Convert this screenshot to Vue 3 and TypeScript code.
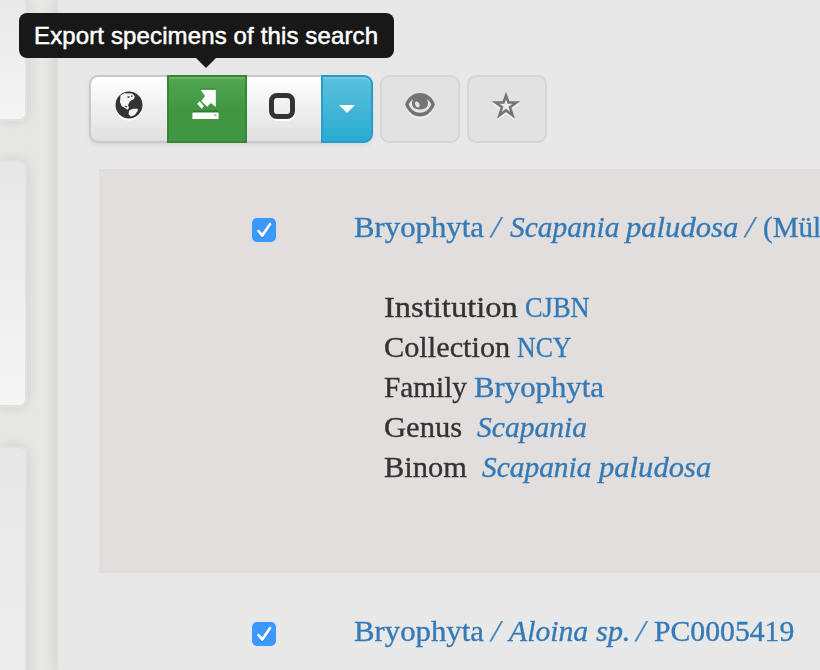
<script setup lang="ts">
interface Word {
  text: string
  advance: number
  stretch: number
  kind?: 'link' | 'taxon' | 'label' | 'slash'
}

const word = (text: string, advance: number, stretch = 1, kind: Word['kind'] = 'link'): Word => ({ text, advance, stretch, kind })

const firstTitle: Word[] = [
  word('Bryophyta', 135, 1.025),
  word('/', 21, 1, 'slash'),
  word('Scapania', 116, 0.98, 'taxon'),
  word('paludosa', 117, 1.02, 'taxon'),
  word('/', 20, 1, 'slash'),
  word('(Mül', 60, 0.97),
]

const secondTitle: Word[] = [
  word('Bryophyta', 135, 1.025),
  word('/', 20, 1, 'slash'),
  word('Aloina', 87, 0.99, 'taxon'),
  word('sp.', 38, 1, 'taxon'),
  word('/', 20, 1, 'slash'),
  word('PC0005419', 142, 0.99),
]

const details: Word[][] = [
  [word('Institution', 141, 1.085, 'label'), word('CJBN', 70, 0.88)],
  [word('Collection', 133, 1.01, 'label'), word('NCY', 60, 0.86)],
  [word('Family', 90, 0.975, 'label'), word('Bryophyta', 130, 1.025)],
  [word('Genus', 93, 1.02, 'label'), word('Scapania', 120, 0.985, 'taxon')],
  [word('Binom', 98, 1.015, 'label'), word('Scapania', 117, 0.98, 'taxon'), word('paludosa', 117, 1.02, 'taxon')],
]

const rows = [
  { title: firstTitle, details },
  { title: secondTitle, details: [] as Word[][] },
]

const shape = (part: Word) => ({
  transform: part.kind === 'slash' ? 'translateX(3px) skewX(-13deg)' : `scaleX(${part.stretch})`,
})
</script>

<template>
  <div class="page">
    <aside class="sidebar">
      <div class="card card-top"></div>
      <div class="card card-middle"></div>
      <div class="card card-bottom"></div>
    </aside>
    <main class="content">
      <div class="toolbar">
        <div class="group">
          <button class="btn globe" aria-label="Map">
            <svg class="globe-icon" viewBox="0 0 28 28">
              <circle cx="14" cy="14" r="13.5" fill="#333" />
              <path fill="#f4f4f4" d="M5.5 4.5 9 2.2l8 .3 2.7 2.5-.6 3L16 9.5 14.5 11 13 14l1 3-1.5 1.7L10 17l-3.5-2L5 11z" />
              <path fill="#f4f4f4" d="m14 19.5 4-1.8h4.7l.2 2-3.4 4.5-4 1.3-2-2.5z" />
              <path fill="none" stroke="#333" stroke-width="1.3" d="M12.5 6h2M16 5.2h1.5M10 15l2 1" />
            </svg>
          </button>
          <button class="btn export" aria-label="Export">
            <svg class="export-icon" viewBox="0 0 28 32">
              <path fill="#2f7c30" d="M8.3.5h15.4v2H8.3zM1 22.5h25v2H1z" />
              <path fill="#fff" d="M8.5 1.8h15.3V19l-4.9-4-3.7 3.8L9.3 13 13 8zM7.6 13.2l4.4 5-2.3 2.6-4.5-5zM1 24.4h25l.6.8V31H.4v-5.8z" />
              <path fill="#8dbb8e" d="M22 26.4h2.5v1.6H22z" />
            </svg>
          </button>
          <button class="btn select" aria-label="Select"><i class="square"></i></button>
          <button class="btn more" aria-label="More"><i class="caret"></i></button>
          <div class="tooltip"><span>Export specimens of this search</span></div>
        </div>
        <button class="btn disabled" aria-label="View" disabled>
          <svg class="eye-icon" viewBox="0 0 30 26">
            <path fill="#747474" d="M15 1C8 1 3 5 0 12.5 3 20 8 24.5 15 24.5S27 20 30 12.5C27 5 22 1 15 1z" />
            <path fill="#e5e5e5" d="M8 7C6 8.5 4.7 10 3.8 12.5 6 18 10 20.7 15 20.7s9-2.7 11.2-8.2C25.3 10 24 8.5 22 7c3 7-1 10.5-7 10.5S5 14 8 7z" />
            <ellipse cx="12.3" cy="12.5" rx="2" ry="3" fill="#e5e5e5" transform="rotate(-28 12.3 12.5)" />
          </svg>
        </button>
        <button class="btn disabled" aria-label="Favorite" disabled>
          <svg class="star-icon" viewBox="0 0 28 28">
            <path fill="#eaeaea" stroke="#747474" stroke-width="2.5" d="m14 4.5 2.5 7h8l-6.5 4.8 2.6 8-6.6-4.9-6.6 4.9 2.6-8-6.5-4.8h8z" />
          </svg>
        </button>
      </div>
      <section v-for="(row, index) in rows" :key="index" class="record">
        <span class="checkbox" role="checkbox" aria-checked="true">
          <svg viewBox="0 0 24 24"><path d="m6.5 13.2 3.8 4.3L18 6.2" /></svg>
        </span>
        <div class="record-body">
          <a class="line">
            <span v-for="(part, i) in row.title" :key="i" class="slot" :style="{ width: part.advance + 'px' }"><span class="word" :class="part.kind" :style="shape(part)">{{ part.text }}</span></span>
          </a>
          <div v-if="row.details.length" class="details">
            <div v-for="(detail, d) in row.details" :key="d" class="line">
              <span v-for="(part, i) in detail" :key="i" class="slot" :style="{ width: part.advance + 'px' }"><span class="word" :class="part.kind" :style="shape(part)">{{ part.text }}</span></span>
            </div>
          </div>
        </div>
      </section>
    </main>
  </div>
</template>

<style>
body { margin: 0; overflow: hidden; }
</style>

<style scoped>
* { box-sizing: border-box; }
.page { display: flex; width: 820px; height: 670px; overflow: hidden; background: #e7e7e4; }
.sidebar { width: 57px; flex: none; display: flex; flex-direction: column; gap: 39px; }
.card { width: 27px; flex: none; border: 2px solid #e1e1e1; border-left: 0; box-shadow: 0 0 14px rgba(0,0,0,.12); }
.card-top { height: 121px; border-top: 0; border-radius: 0 0 8px 0; background: linear-gradient(#e8e8e8, #f5f5f5); }
.card-middle { height: 247px; border-radius: 0 8px 8px 0; background: linear-gradient(#e7e7e7, #f5f5f5); }
.card-bottom { height: 260px; border-radius: 0 8px 0 0; background: linear-gradient(#e7e7e7, #eee); }
.content { flex: 1; min-width: 0; height: 670px; padding: 75px 0 0 30px; background: #e8e8e8; border-left: 2px solid #e3e3e3; box-shadow: 0 0 14px rgba(0,0,0,.13); }
.toolbar { display: flex; gap: 7px; height: 94px; align-items: flex-start; }
.group { display: flex; position: relative; border-radius: 9px; box-shadow: 0 2px 4px rgba(0,0,0,.08); }
.btn { display: flex; align-items: flex-start; justify-content: center; margin: 0; padding: 14px 0 0; height: 68px; border: 2px solid #c9c9c9; background: linear-gradient(#fff, #e0e0e0); }
.globe { width: 78px; border-right: 0; border-radius: 9px 0 0 9px; }
.export { width: 80px; border-color: #398439; background: linear-gradient(#52a852, #419641 50%); box-shadow: inset 0 2px rgba(255,255,255,.15); padding-top: 11px; }
.select { width: 74px; border-left: 0; border-right: 0; padding-top: 16px; }
.more { width: 52px; border-color: #269ec5; border-radius: 0 9px 9px 0; background: linear-gradient(#5bc0de, #2aabd2); box-shadow: inset 0 2px rgba(255,255,255,.15); padding-top: 28px; }
.disabled { width: 80px; border-color: #d5d5d5; border-radius: 9px; background: #e2e2e2; }
.globe-icon { width: 28px; height: 28px; filter: drop-shadow(0 2px #fff); margin-right: 1px; }
.export-icon { width: 28px; height: 32px; margin-right: 2px; }
.square { display: block; width: 26px; height: 26px; border: 5px solid #333; border-radius: 8px; box-shadow: 0 2px #fff; margin-right: 4px; }
.caret { border: 8px solid transparent; border-top-color: #fff; border-bottom: 0; }
.eye-icon { width: 30px; height: 26px; filter: drop-shadow(0 2px #f3f3f3); margin-top: 1px; }
.star-icon { width: 28px; height: 28px; filter: drop-shadow(0 2px #f3f3f3); margin-right: 2px; }
.tooltip { position: absolute; left: -70px; top: -62px; width: 375px; height: 45px; padding-left: 15px; border-radius: 8px; background: #181818; color: #fff; font: 24px/45px "Liberation Sans", Arial, sans-serif; letter-spacing: .13px; white-space: nowrap; -webkit-text-stroke: .5px #fff; }
.tooltip::after { content: ""; position: absolute; left: 177px; top: 45px; border: 10px solid transparent; border-top-color: #181818; border-bottom: 0; }
.record { display: flex; margin-left: 10px; padding: 38px 0 0 153px; height: 404px; overflow: hidden; }
.record:first-of-type { background: #e2dedd; }
.checkbox { width: 24px; height: 24px; margin: 11px 78px 0 0; flex: none; border-radius: 5px; background: #3b99fc; }
.checkbox svg { display: block; fill: none; stroke: #fff; stroke-width: 2.7; stroke-linecap: round; stroke-linejoin: round; filter: drop-shadow(0 1px #2b83d9); }
.record-body { flex: none; }
.line { display: flex; height: 40px; font: 30px/40px "Liberation Serif", "Times New Roman", serif; white-space: nowrap; }
.details { padding: 40px 0 0 30px; }
.slot { flex: none; display: block; }
.word { display: inline-block; transform-origin: left; -webkit-text-stroke: .35px currentColor; }
.link, .slash, .taxon { color: #337ab7; }
.taxon { font-style: italic; }
.slash { transform-origin: center; }
.label { color: #333; }
</style>
